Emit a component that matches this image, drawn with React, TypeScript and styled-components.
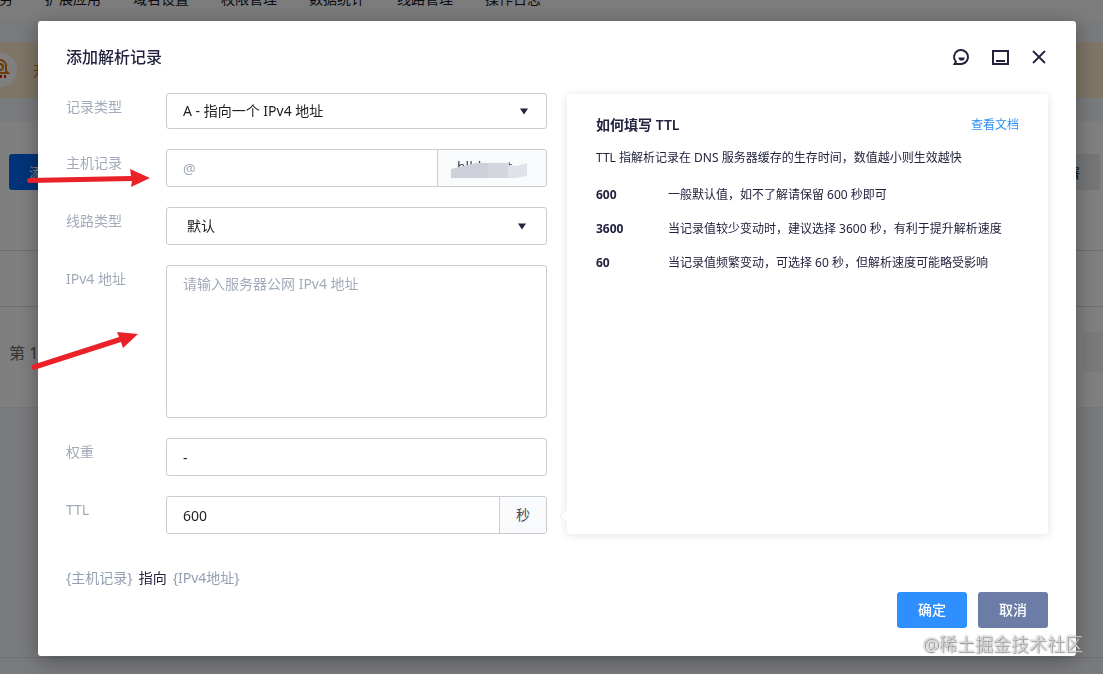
import React from "react";
import styled, { createGlobalStyle, css } from "styled-components";

const GlobalStyle = createGlobalStyle`
  * { box-sizing: border-box; }
  body {
    margin: 0;
    background: #f3f5f8;
    color: #23233f;
    font-family: "Noto Sans", "Noto Sans CJK SC", sans-serif;
    font-size: 14px;
    overflow: hidden;
  }
  input, select, textarea, button { font: inherit; color: inherit; }
`;

const Console = styled.div`
  height: 100vh;
  overflow: hidden;
`;

const TopNav = styled.nav`
  display: flex;
  gap: 32px;
  height: 21px;
  margin-left: -1px;
  background: #f9f9f9;
  line-height: 20px;
  white-space: nowrap;
  overflow: hidden;
`;

const NavLink = styled.a`
  margin-top: -11px;
  color: #16161e;
  text-decoration: none;
`;

const Banner = styled.div`
  display: flex;
  align-items: center;
  gap: 16px;
  height: 56px;
  margin: 21px 0 23px;
  background: #fdeace;
  color: #d08010;
`;

const Mascot = styled.div`
  flex: none;
  width: 34px;
  height: 34px;
  margin-left: -17px;
  border-radius: 50%;
  background: #fff;
`;

const RecordsPanel = styled.section`
  height: 287px;
  padding-top: 33px;
  background: #fff;
  border-bottom: 1px solid #eceef1;
`;

const PanelTools = styled.div`
  display: flex;
  justify-content: space-between;
  height: 36px;
  margin-bottom: 60px;
  padding: 0 3px 0 9px;
`;

const ToolButton = styled.button<{ $primary?: boolean }>`
  width: 120px;
  border: 0;
  border-radius: 3px;
  background: ${(p) => (p.$primary ? "#0067f0" : "#e8ebee")};
  color: ${(p) => (p.$primary ? "#fff" : "#23233f")};
  text-align: ${(p) => (p.$primary ? "left" : "right")};
  padding: 0 20px;
  white-space: nowrap;
`;

const BlankRow = styled.div`
  height: 56px;
  border-top: 1px solid #dcdcdc;
`;

const Pager = styled.div`
  display: flex;
  align-items: center;
  justify-content: space-between;
  height: 90px;
  padding-left: 9px;
  border-top: 1px solid #dcdcdc;
  color: #666;
  font-size: 16px;
`;

const PagerBox = styled.div`
  width: 20px;
  height: 40px;
  background: #f5f5f5;
`;

const BottomRule = styled.hr`
  margin: 249px 0 0;
  border: 0;
  border-top: 1px solid #dfe1e4;
`;

const Overlay = styled.div`
  position: fixed;
  inset: 0;
  padding: 21px 27px 18px 38px;
  background: rgba(0, 0, 0, 0.5);
`;

const Dialog = styled.section`
  padding: 0 28px 28px;
  border-radius: 3px;
  background: #fff;
  box-shadow: 0 4px 20px rgba(0, 0, 0, 0.35);
`;

const DialogHeader = styled.header`
  display: flex;
  align-items: center;
  justify-content: space-between;
  height: 72px;
`;

const Title = styled.h2`
  margin: 0;
  font-size: 16px;
  font-weight: 500;
  line-height: 24px;
`;

const HeaderActions = styled.div`
  display: flex;
  gap: 19px;
  margin-right: -1px;
`;

const IconButton = styled.button`
  display: flex;
  padding: 0;
  border: 0;
  background: none;
`;

const Columns = styled.div`
  display: grid;
  grid-template-columns: 1fr 1fr;
  gap: 20px;
`;

const Fields = styled.div`
  display: flex;
  flex-direction: column;
  gap: 20px;
`;

const Field = styled.div`
  display: grid;
  grid-template-columns: 100px 1fr;
`;

const Label = styled.label`
  color: #a2abb9;
  line-height: 28px;
`;

const controlText = css`
  width: 100%;
  min-width: 0;
  border: 0;
  outline: 0;
  background: none;
  color: #222;
  &::placeholder { color: #a2abb9; opacity: 1; }
`;

const Control = styled.div<{ $height: number }>`
  display: flex;
  align-items: center;
  height: ${(p) => p.$height}px;
  border: 1px solid #caccd2;
  border-radius: 3px;
  overflow: hidden;
`;

const Select = styled.select<{ $indent: number }>`
  ${controlText}
  appearance: none;
  height: 100%;
  padding: 0 0 2px ${(p) => p.$indent}px;
`;

const Caret = styled.svg<{ $inset: number }>`
  flex: none;
  margin-right: ${(p) => p.$inset}px;
  pointer-events: none;
`;

const TextInput = styled.input`
  ${controlText}
  height: 100%;
  padding: 0 16px;
`;

const TextArea = styled.textarea`
  ${controlText}
  height: 100%;
  padding: 8px 16px;
  line-height: 20px;
  resize: none;
`;

const Suffix = styled.span<{ $width: number }>`
  display: flex;
  flex: none;
  align-items: center;
  justify-content: center;
  width: ${(p) => p.$width}px;
  height: 100%;
  padding-bottom: 2px;
  border-left: 1px solid #caccd2;
  background: #f8fafc;
  color: #44485a;
`;

const HelpCard = styled.aside`
  position: relative;
  margin-top: 1px;
  padding: 19px 29px;
  border-radius: 3px;
  background: #fff;
  box-shadow: 0 1px 8px rgba(30, 50, 80, 0.14);
  font-size: 12px;
  line-height: 20px;
`;

const HelpArrow = styled.svg`
  position: absolute;
  left: -8px;
  bottom: 9px;
`;

const HelpHead = styled.div`
  display: flex;
  justify-content: space-between;
  align-items: center;
`;

const HelpTitle = styled.h3`
  margin: 0;
  font-size: 14px;
  font-weight: 600;
  line-height: 24px;
`;

const DocLink = styled.a`
  color: #2e8ff5;
  text-decoration: none;
`;

const HelpText = styled.p`
  margin: 11px 0 0;
`;

const HelpList = styled.dl`
  display: grid;
  grid-template-columns: 72px 1fr;
  row-gap: 14px;
  margin: 17px 0 0;
`;

const Term = styled.dt`
  font-family: "Open Sans", sans-serif;
  font-weight: 700;
`;

const Meaning = styled.dd`
  margin: 0;
  white-space: nowrap;
`;

const Summary = styled.p`
  display: flex;
  gap: 6px;
  margin: 34px 0 4px;
  line-height: 20px;
`;

const Token = styled.span`
  color: #94a0b2;
`;

const Actions = styled.footer`
  display: flex;
  justify-content: flex-end;
  gap: 11px;
`;

const ActionButton = styled.button<{ $primary?: boolean }>`
  width: 70px;
  height: 36px;
  padding: 0 0 2px;
  border: 0;
  border-radius: 3px;
  background: ${(p) => (p.$primary ? "#2e90ff" : "#6b7da6")};
  color: #fff;
  font-weight: 500;
`;

const Watermark = styled.div`
  position: fixed;
  right: 20px;
  bottom: 18px;
  color: rgba(225, 225, 225, 0.9);
  font-size: 18px;
  font-weight: 300;
  line-height: 24px;
  text-shadow: 0 0 2px #777, 1px 1px 1px #888;
`;

const Arrows = styled.svg`
  position: fixed;
  left: 0;
  top: 160px;
  pointer-events: none;
`;

const NAV = ["务", "扩展应用", "域名设置", "权限管理", "数据统计", "线路管理", "操作日志"];

const TTL_HELP = [
  ["600", "一般默认值，如不了解请保留 600 秒即可"],
  ["3600", "当记录值较少变动时，建议选择 3600 秒，有利于提升解析速度"],
  ["60", "当记录值频繁变动，可选择 60 秒，但解析速度可能略受影响"],
];

function DownCaret({ inset }: { inset: number }) {
  return (
    <Caret $inset={inset} width="8" height="7" viewBox="0 0 8 7" aria-hidden="true">
      <path d="M0 0.5H8L4 6.5Z" fill="#23233f" />
    </Caret>
  );
}

function ConsolePage() {
  return (
    <Console>
      <TopNav>
        {NAV.map((item) => (
          <NavLink href="#" key={item}>{item}</NavLink>
        ))}
      </TopNav>
      <Banner>
        <Mascot>
          <svg width="34" height="34" viewBox="0 0 34 34" aria-hidden="true">
            <path d="M9 20H25L23 18V14A6 6 0 0 0 11 12" fill="none" stroke="#d97808" strokeWidth="2" />
            <path d="M14 14a3 3 0 0 1 6 0a3 3 0 0 1-4 3" fill="none" stroke="#d97808" strokeWidth="2" />
            <path d="M13 22v3M18 22v3M22 22v3" stroke="#d42010" strokeWidth="2" />
          </svg>
        </Mascot>
        开
      </Banner>
      <RecordsPanel>
        <PanelTools>
          <ToolButton $primary>添加记录</ToolButton>
          <ToolButton>导入 / 部署</ToolButton>
        </PanelTools>
        <BlankRow />
        <Pager>
          <span>第 1 页</span>
          <PagerBox />
        </Pager>
      </RecordsPanel>
      <BottomRule />
    </Console>
  );
}

export default function App() {
  return (
    <>
      <GlobalStyle />
      <ConsolePage />
      <Overlay>
        <Dialog role="dialog" aria-labelledby="dialog-title">
          <DialogHeader>
            <Title id="dialog-title">添加解析记录</Title>
            <HeaderActions>
              <IconButton aria-label="反馈">
                <svg width="20" height="20" viewBox="0 0 20 20" fill="none">
                  <path d="M4.9 14.8A7 7 0 1 1 10.6 17H3.6L4.9 14.8Z" stroke="#23233f" strokeWidth="2" />
                  <path d="M7.5 10.4H13.7A3.1 3.1 0 0 1 7.5 10.4Z" fill="#23233f" />
                </svg>
              </IconButton>
              <IconButton aria-label="最小化">
                <svg width="20" height="20" viewBox="0 0 20 20" fill="none" stroke="#23233f" strokeWidth="2">
                  <path d="M3 4H18V17H3ZM6 14H15" />
                </svg>
              </IconButton>
              <IconButton aria-label="关闭">
                <svg width="20" height="20" viewBox="0 0 20 20" fill="none" stroke="#23233f" strokeWidth="1.8">
                  <path d="M4 4L16 16M16 4L4 16" />
                </svg>
              </IconButton>
            </HeaderActions>
          </DialogHeader>

          <Columns>
            <Fields>
              <Field>
                <Label htmlFor="type">记录类型</Label>
                <Control $height={36}>
                  <Select id="type" $indent={16}><option>A - 指向一个 IPv4 地址</option></Select>
                  <DownCaret inset={18} />
                </Control>
              </Field>
              <Field>
                <Label htmlFor="host">主机记录</Label>
                <Control $height={38}>
                  <TextInput id="host" placeholder="@" />
                  <Suffix $width={109}>
                    <svg width="84" height="24" viewBox="0 0 84 24" aria-hidden="true">
                      <text x="7" y="17" fontSize="14" fill="#44485a">blbb</text>
                      <text x="57" y="17" fontSize="14" fill="#44485a">t</text>
                      <path d="M1 14L26 8H39V23H1Z" fill="#cdd0d8" />
                      <path d="M38 8H59V23H38Z" fill="#d3d6dd" />
                      <path d="M58 10L66 11L77 8V21L66 23H58Z" fill="#dfe2e8" />
                    </svg>
                  </Suffix>
                </Control>
              </Field>
              <Field>
                <Label htmlFor="line">线路类型</Label>
                <Control $height={38}>
                  <Select id="line" $indent={20}><option>默认</option></Select>
                  <DownCaret inset={20} />
                </Control>
              </Field>
              <Field>
                <Label htmlFor="address">IPv4 地址</Label>
                <Control $height={153}>
                  <TextArea id="address" placeholder="请输入服务器公网 IPv4 地址" />
                </Control>
              </Field>
              <Field>
                <Label htmlFor="weight">权重</Label>
                <Control $height={38}>
                  <TextInput id="weight" defaultValue="-" />
                </Control>
              </Field>
              <Field>
                <Label htmlFor="ttl">TTL</Label>
                <Control $height={38}>
                  <TextInput id="ttl" defaultValue="600" />
                  <Suffix $width={47}>秒</Suffix>
                </Control>
              </Field>
            </Fields>

            <HelpCard>
              <HelpArrow width="10" height="18" viewBox="0 0 10 18" aria-hidden="true">
                <path d="M10 1L1 9L10 17Z" fill="#fff" />
                <path d="M8 2L1 9L8 16" fill="none" stroke="#e8ebef" />
              </HelpArrow>
              <HelpHead>
                <HelpTitle>如何填写 TTL</HelpTitle>
                <DocLink href="#">查看文档</DocLink>
              </HelpHead>
              <HelpText>TTL 指解析记录在 DNS 服务器缓存的生存时间，数值越小则生效越快</HelpText>
              <HelpList>
                {TTL_HELP.map(([value, text]) => (
                  <React.Fragment key={value}>
                    <Term>{value}</Term>
                    <Meaning>{text}</Meaning>
                  </React.Fragment>
                ))}
              </HelpList>
            </HelpCard>
          </Columns>

          <Summary>
            <Token>{"{主机记录}"}</Token>
            <span>指向</span>
            <Token>{"{IPv4地址}"}</Token>
          </Summary>
          <Actions>
            <ActionButton $primary>确定</ActionButton>
            <ActionButton>取消</ActionButton>
          </Actions>
        </Dialog>
      </Overlay>
      <Arrows width="160" height="220" viewBox="0 160 160 220" fill="#ea2127" aria-hidden="true">
        <path d="M29 178L131 176L130 169L150 178L131 187L132 181L29 183Q25 181 29 178Z" />
        <path d="M32 365L119 337L117 332L138 334L123 348L121 342L34 370Q31 369 32 365Z" />
      </Arrows>
      <Watermark>@稀土掘金技术社区</Watermark>
    </>
  );
}
